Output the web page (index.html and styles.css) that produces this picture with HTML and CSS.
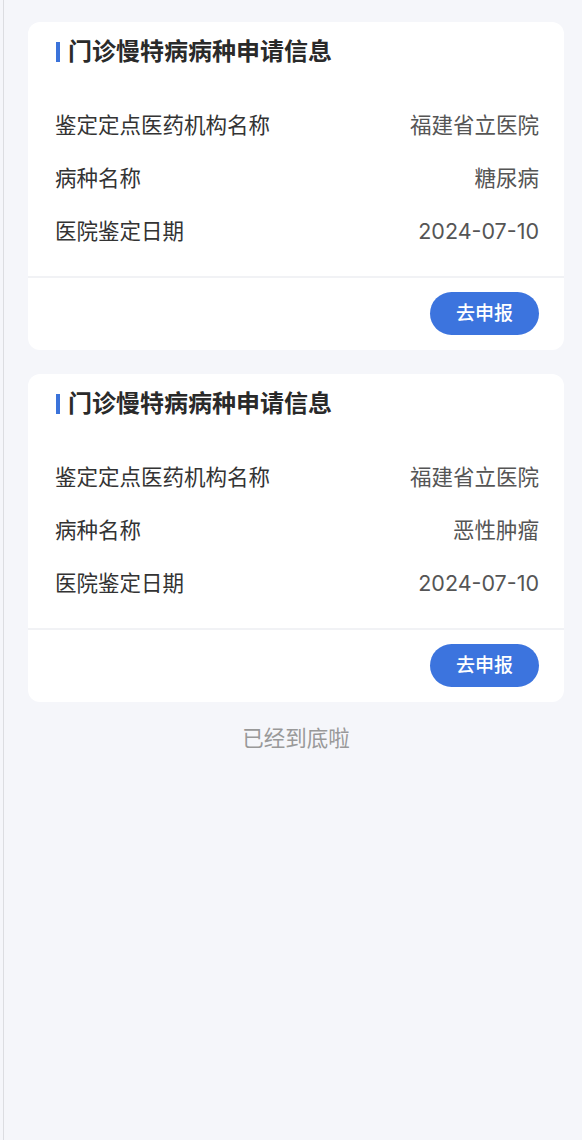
FILE: index.html
```html
<!DOCTYPE html>
<html lang="zh-CN">
<head>
	<meta charset="UTF-8">
	<title>门诊慢特病病种申请信息</title>
	<link rel="stylesheet" href="styles.css">
</head>
<body>
<div class="page">
	<div class="card">
		<h3 class="card-title">门诊慢特病病种申请信息</h3>
		<ul class="info">
			<li><span class="label">鉴定定点医药机构名称</span><span class="value">福建省立医院</span></li>
			<li><span class="label">病种名称</span><span class="value">糖尿病</span></li>
			<li><span class="label">医院鉴定日期</span><span class="value">2024-07-10</span></li>
		</ul>
		<div class="card-foot">
			<a href="javascript:;" class="btn">去申报</a>
		</div>
	</div>

	<div class="card">
		<h3 class="card-title">门诊慢特病病种申请信息</h3>
		<ul class="info">
			<li><span class="label">鉴定定点医药机构名称</span><span class="value">福建省立医院</span></li>
			<li><span class="label">病种名称</span><span class="value">恶性肿瘤</span></li>
			<li><span class="label">医院鉴定日期</span><span class="value">2024-07-10</span></li>
		</ul>
		<div class="card-foot">
			<a href="javascript:;" class="btn">去申报</a>
		</div>
	</div>

	<p class="end">已经到底啦</p>
</div>
</body>
</html>
```

FILE: styles.css
```css
body,h3,ul,li,p{margin:0;padding:0}
body{font-family:Inter,"Noto Sans CJK SC",sans-serif;color:#333;background:#f5f6fa;}
ul{list-style:none}
a{text-decoration:none}

.page{
    margin-left:3px;
    border-left:1px solid #dcdde1;
    padding:22px 18px 0 24px;
    min-height:100vh;
    box-sizing:border-box;
}
.card{
    background:#fff;
    border-radius:12px;
    margin-bottom:24px;
}
.card-title{
    display:flex;
    align-items:center;
    padding:14px 25px 0 28px;
    font-size:24px;
    line-height:32px;
    font-weight:bold;
    color:#2a2a2a;
}
.card-title::before{
    content:"";
    width:4px;
    height:20px;
    background:#3b73da;
    margin-right:8px;
}
.info{
    margin-top:31px;
    padding:0 25px 18px 27px;
}
.info li{
    display:flex;
    justify-content:space-between;
    height:53px;
    line-height:53px;
    font-size:21.5px;
}
.label{color:#333;}
.value{color:#555;}
.card-foot{
    display:flex;
    justify-content:flex-end;
    border-top:2px solid #f1f2f5;
    padding:14px 25px 15px;
}
.btn{
    width:109px;
    height:43px;
    line-height:43px;
    text-align:center;
    border-radius:22px;
    background:#3c74de;
    color:#fff;
    font-size:19px;
    font-weight:500;
}
.end{
    margin-top:-4px;
    text-align:center;
    font-size:21.5px;
    line-height:32px;
    color:#999;
}
```
